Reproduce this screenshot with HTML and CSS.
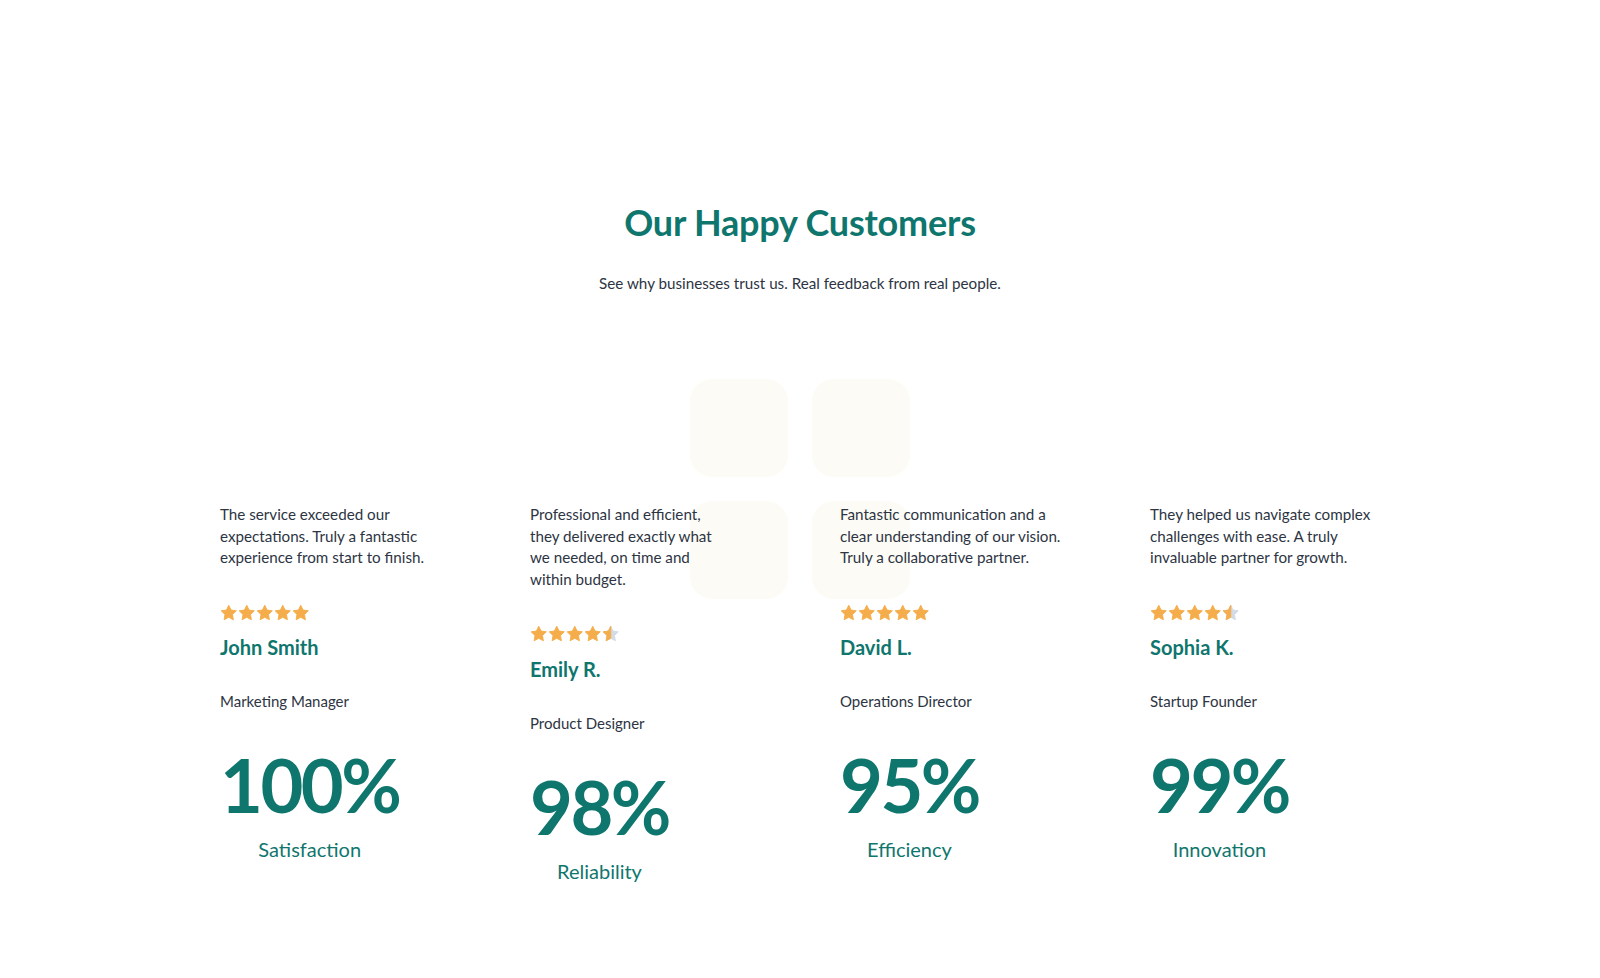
FILE: index.html
```html
<!DOCTYPE html>
<html lang="en">
<head>
<meta charset="utf-8">
<title>Our Happy Customers</title>
<link rel="stylesheet" href="styles.css">
</head>
<body>
<section class="testimonials">
  <header class="intro">
    <h1 class="title">Our Happy Customers</h1>
    <p class="subtitle">See why businesses trust us. Real feedback from real people.</p>
  </header>

  <div class="stage">
    <div class="deco" aria-hidden="true">
      <span class="tile"></span><span class="tile"></span>
      <span class="tile"></span><span class="tile"></span>
    </div>

    <div class="cards">
      <article class="card">
        <p class="quote">The service exceeded our<br>expectations. Truly a fantastic<br>experience from start to finish.</p>
        <div class="stars" data-rating="5">
          <svg class="star" viewBox="1 1 22 22"><path d="M12 2.6l2.9 6 6.6 1-4.8 4.6 1.1 6.6L12 17.7l-5.8 3.1 1.1-6.6-4.8-4.6 6.6-1z"/></svg>
          <svg class="star" viewBox="1 1 22 22"><path d="M12 2.6l2.9 6 6.6 1-4.8 4.6 1.1 6.6L12 17.7l-5.8 3.1 1.1-6.6-4.8-4.6 6.6-1z"/></svg>
          <svg class="star" viewBox="1 1 22 22"><path d="M12 2.6l2.9 6 6.6 1-4.8 4.6 1.1 6.6L12 17.7l-5.8 3.1 1.1-6.6-4.8-4.6 6.6-1z"/></svg>
          <svg class="star" viewBox="1 1 22 22"><path d="M12 2.6l2.9 6 6.6 1-4.8 4.6 1.1 6.6L12 17.7l-5.8 3.1 1.1-6.6-4.8-4.6 6.6-1z"/></svg>
          <svg class="star" viewBox="1 1 22 22"><path d="M12 2.6l2.9 6 6.6 1-4.8 4.6 1.1 6.6L12 17.7l-5.8 3.1 1.1-6.6-4.8-4.6 6.6-1z"/></svg>
        </div>
        <h3 class="name">John Smith</h3>
        <p class="role">Marketing Manager</p>
        <div class="stat">
          <span class="stat-num">100%</span>
          <span class="stat-label">Satisfaction</span>
        </div>
      </article>

      <article class="card">
        <p class="quote">Professional and efficient,<br>they delivered exactly what<br>we needed, on time and<br>within budget.</p>
        <div class="stars" data-rating="4.5">
          <svg class="star" viewBox="1 1 22 22"><path d="M12 2.6l2.9 6 6.6 1-4.8 4.6 1.1 6.6L12 17.7l-5.8 3.1 1.1-6.6-4.8-4.6 6.6-1z"/></svg>
          <svg class="star" viewBox="1 1 22 22"><path d="M12 2.6l2.9 6 6.6 1-4.8 4.6 1.1 6.6L12 17.7l-5.8 3.1 1.1-6.6-4.8-4.6 6.6-1z"/></svg>
          <svg class="star" viewBox="1 1 22 22"><path d="M12 2.6l2.9 6 6.6 1-4.8 4.6 1.1 6.6L12 17.7l-5.8 3.1 1.1-6.6-4.8-4.6 6.6-1z"/></svg>
          <svg class="star" viewBox="1 1 22 22"><path d="M12 2.6l2.9 6 6.6 1-4.8 4.6 1.1 6.6L12 17.7l-5.8 3.1 1.1-6.6-4.8-4.6 6.6-1z"/></svg>
          <svg class="star" viewBox="1 1 22 22"><path class="empty" d="M12 2.6l2.9 6 6.6 1-4.8 4.6 1.1 6.6L12 17.7l-5.8 3.1 1.1-6.6-4.8-4.6 6.6-1z"/><path d="M12 2.6V17.7l-5.8 3.1 1.1-6.6-4.8-4.6 6.6-1z"/></svg>
        </div>
        <h3 class="name">Emily R.</h3>
        <p class="role">Product Designer</p>
        <div class="stat">
          <span class="stat-num">98%</span>
          <span class="stat-label">Reliability</span>
        </div>
      </article>

      <article class="card">
        <p class="quote">Fantastic communication and a<br>clear understanding of our vision.<br>Truly a collaborative partner.</p>
        <div class="stars" data-rating="5">
          <svg class="star" viewBox="1 1 22 22"><path d="M12 2.6l2.9 6 6.6 1-4.8 4.6 1.1 6.6L12 17.7l-5.8 3.1 1.1-6.6-4.8-4.6 6.6-1z"/></svg>
          <svg class="star" viewBox="1 1 22 22"><path d="M12 2.6l2.9 6 6.6 1-4.8 4.6 1.1 6.6L12 17.7l-5.8 3.1 1.1-6.6-4.8-4.6 6.6-1z"/></svg>
          <svg class="star" viewBox="1 1 22 22"><path d="M12 2.6l2.9 6 6.6 1-4.8 4.6 1.1 6.6L12 17.7l-5.8 3.1 1.1-6.6-4.8-4.6 6.6-1z"/></svg>
          <svg class="star" viewBox="1 1 22 22"><path d="M12 2.6l2.9 6 6.6 1-4.8 4.6 1.1 6.6L12 17.7l-5.8 3.1 1.1-6.6-4.8-4.6 6.6-1z"/></svg>
          <svg class="star" viewBox="1 1 22 22"><path d="M12 2.6l2.9 6 6.6 1-4.8 4.6 1.1 6.6L12 17.7l-5.8 3.1 1.1-6.6-4.8-4.6 6.6-1z"/></svg>
        </div>
        <h3 class="name">David L.</h3>
        <p class="role">Operations Director</p>
        <div class="stat">
          <span class="stat-num">95%</span>
          <span class="stat-label">Efficiency</span>
        </div>
      </article>

      <article class="card">
        <p class="quote">They helped us navigate complex<br>challenges with ease. A truly<br>invaluable partner for growth.</p>
        <div class="stars" data-rating="4.5">
          <svg class="star" viewBox="1 1 22 22"><path d="M12 2.6l2.9 6 6.6 1-4.8 4.6 1.1 6.6L12 17.7l-5.8 3.1 1.1-6.6-4.8-4.6 6.6-1z"/></svg>
          <svg class="star" viewBox="1 1 22 22"><path d="M12 2.6l2.9 6 6.6 1-4.8 4.6 1.1 6.6L12 17.7l-5.8 3.1 1.1-6.6-4.8-4.6 6.6-1z"/></svg>
          <svg class="star" viewBox="1 1 22 22"><path d="M12 2.6l2.9 6 6.6 1-4.8 4.6 1.1 6.6L12 17.7l-5.8 3.1 1.1-6.6-4.8-4.6 6.6-1z"/></svg>
          <svg class="star" viewBox="1 1 22 22"><path d="M12 2.6l2.9 6 6.6 1-4.8 4.6 1.1 6.6L12 17.7l-5.8 3.1 1.1-6.6-4.8-4.6 6.6-1z"/></svg>
          <svg class="star" viewBox="1 1 22 22"><path class="empty" d="M12 2.6l2.9 6 6.6 1-4.8 4.6 1.1 6.6L12 17.7l-5.8 3.1 1.1-6.6-4.8-4.6 6.6-1z"/><path d="M12 2.6V17.7l-5.8 3.1 1.1-6.6-4.8-4.6 6.6-1z"/></svg>
        </div>
        <h3 class="name">Sophia K.</h3>
        <p class="role">Startup Founder</p>
        <div class="stat">
          <span class="stat-num">99%</span>
          <span class="stat-label">Innovation</span>
        </div>
      </article>
    </div>
  </div>
</section>
</body>
</html>
```

FILE: styles.css
```css
* { box-sizing: border-box; }

html, body {
  margin: 0;
  padding: 0;
  background: #ffffff;
}

body {
  font-family: "Lato", "Noto Sans", "DejaVu Sans", sans-serif;
  color: #2d3443;
}

.testimonials {
  width: 1160px;
  margin: 0 auto;
  padding-top: 198px;
  padding-bottom: 80px;
}

.intro {
  text-align: center;
}

.title {
  margin: 0;
  font-size: 36px;
  line-height: 48px;
  font-weight: 700;
  color: #0f766e;
  letter-spacing: -0.2px;
}

.subtitle {
  margin: 26px 0 0;
  font-size: 15.2px;
  line-height: 22px;
  color: #2d3443;
}

.stage {
  position: relative;
  margin-top: 210px;
}

.deco {
  position: absolute;
  top: -125px;
  left: 50%;
  margin-left: -110px;
  width: 220px;
  display: grid;
  grid-template-columns: 98px 98px;
  gap: 24px;
  z-index: 0;
}

.tile {
  width: 98px;
  height: 98px;
  border-radius: 22px;
  background: #fcfbf5;
}

.cards {
  position: relative;
  z-index: 1;
  display: grid;
  grid-template-columns: repeat(4, 230px);
  column-gap: 80px;
  align-items: start;
}

.card {
  display: flex;
  flex-direction: column;
  align-items: flex-start;
}

.quote {
  margin: 0;
  font-size: 15.2px;
  line-height: 21.5px;
  white-space: nowrap;
  color: #2d3443;
}

.stars {
  display: flex;
  gap: 0.5px;
  margin-top: 35px;
}

.star {
  width: 17.5px;
  height: 17.5px;
  display: block;
  overflow: visible;
}

.star path {
  fill: #f4ad4a;
  stroke: #f4ad4a;
  stroke-width: 1.2;
  stroke-linejoin: round;
}

.star path.empty {
  fill: #d3dce6;
  stroke: #d3dce6;
}

.name {
  margin: 12px 0 0;
  font-size: 20px;
  line-height: 28px;
  font-weight: 700;
  color: #0f766e;
}

.role {
  margin: 29px 0 0;
  font-size: 15px;
  line-height: 22px;
  color: #2d3443;
}

.stat {
  margin-top: 37px;
  display: inline-flex;
  flex-direction: column;
  align-items: center;
}

.stat-num {
  font-size: 74px;
  line-height: 72px;
  font-weight: 700;
  color: #0f766e;
  letter-spacing: -2.5px;
}

.stat-label {
  margin-top: 14px;
  font-size: 20px;
  line-height: 28px;
  color: #0f766e;
}
```
